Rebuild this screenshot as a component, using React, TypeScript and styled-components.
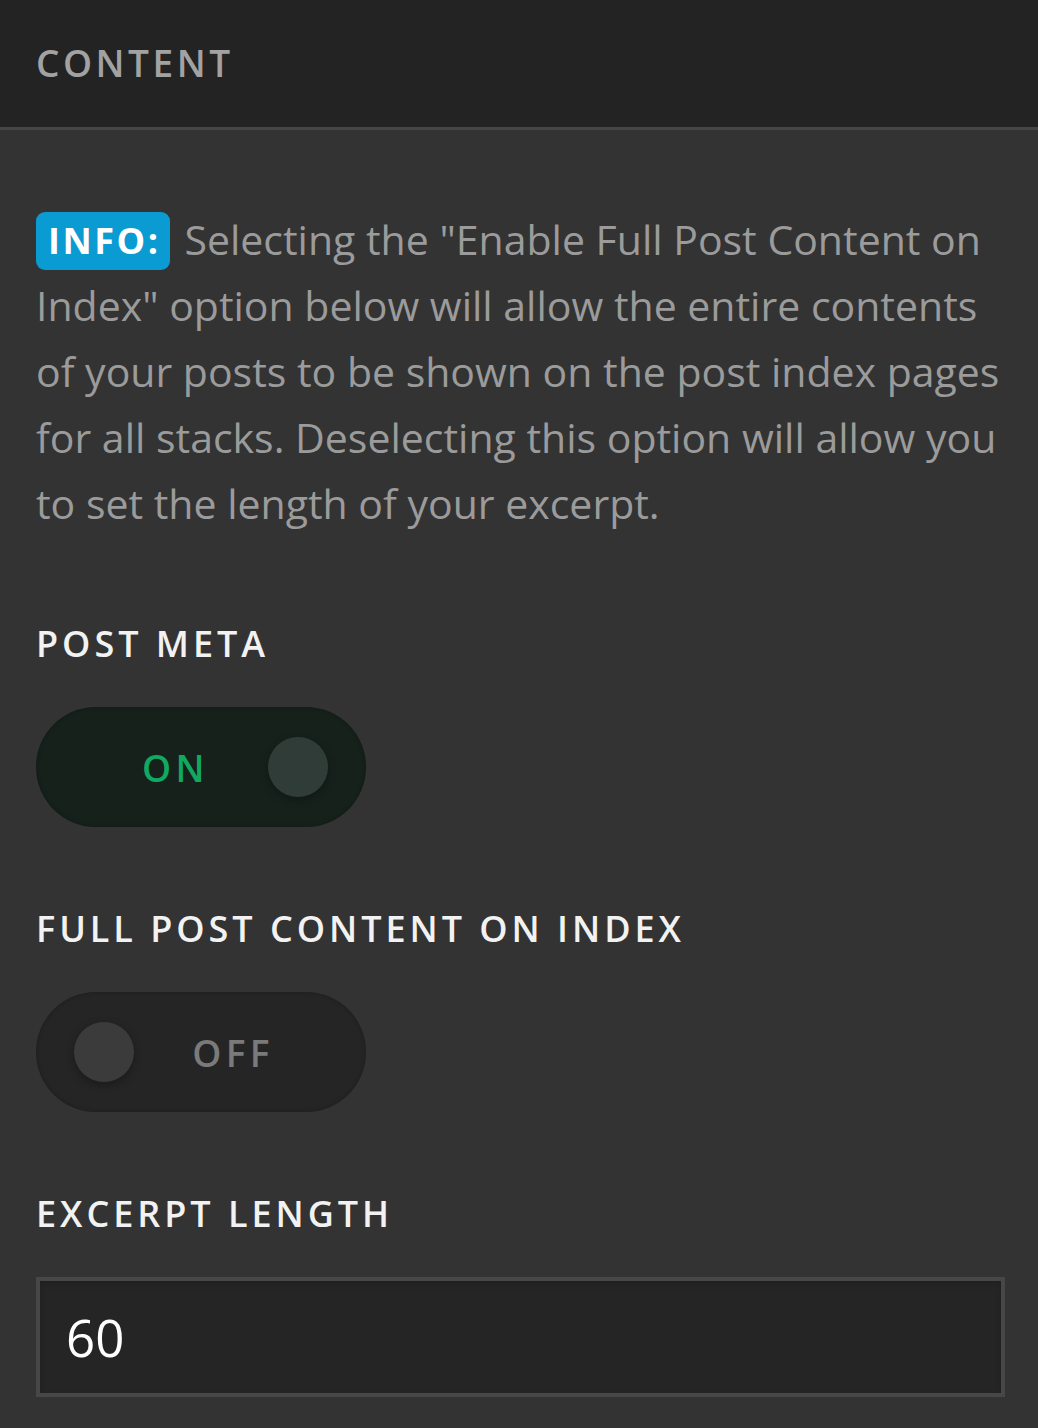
import { FC } from "react";
import styled, { createGlobalStyle } from "styled-components";

const GlobalStyle = createGlobalStyle`
  html, body {
    margin: 0;
    padding: 0;
    background-color: #333333;
  }
  body {
    font-family: "Open Sans", "Liberation Sans", sans-serif;
  }
`;

const Panel = styled.div`
  width: 1038px;
  min-height: 1428px;
  background-color: #333333;
`;

const Header = styled.div`
  height: 130px;
  background-color: #232323;
  border-bottom: 3px solid #464646;
  display: flex;
  align-items: center;
  padding: 0 36px 2px;
  box-sizing: border-box;

  h2 {
    margin: 0;
    font-size: 37px;
    font-weight: 600;
    letter-spacing: 0.095em;
    color: #a2a2a2;
  }
`;

const Body = styled.div`
  padding: 76px 33px 0 36px;
  display: flex;
  flex-direction: column;
`;

const Info = styled.p`
  margin: 0 0 83px;
  font-size: 41px;
  line-height: 66px;
  color: #9b9b9b;
`;

const Badge = styled.span`
  display: inline-block;
  background-color: #0b9bd3;
  color: #ffffff;
  font-weight: 700;
  letter-spacing: 0.07em;
  font-size: 36px;
  line-height: 58px;
  padding: 0 10px 0 12px;
  border-radius: 9px;
  margin-right: 14px;
  vertical-align: 1px;
`;

const Label = styled.div`
  font-size: 36px;
  font-weight: 600;
  letter-spacing: 0.11em;
  color: #f2f2f2;
  line-height: 50px;
  margin-bottom: 38px;
`;

const Toggle = styled.div<{ $on: boolean }>`
  width: 330px;
  height: 120px;
  border-radius: 60px;
  box-sizing: border-box;
  background-color: ${(p) => (p.$on ? "#16211c" : "#252525")};
  box-shadow: inset 0 0 4px rgba(0, 0, 0, 0.25);
  display: flex;
  flex-direction: ${(p) => (p.$on ? "row" : "row-reverse")};
  align-items: center;
  justify-content: space-between;
  padding: ${(p) => (p.$on ? "0 38px 0 106px" : "0 92px 0 38px")};
  margin-bottom: 77px;

  span {
    font-size: 37px;
    font-weight: 600;
    letter-spacing: 0.12em;
    color: ${(p) => (p.$on ? "#11a862" : "#7a7a7a")};
  }
`;

const Knob = styled.div<{ $on: boolean }>`
  width: 60px;
  height: 60px;
  border-radius: 50%;
  background-color: ${(p) => (p.$on ? "#2f3c37" : "#3b3b3b")};
  box-shadow: 0 3px 8px rgba(0, 0, 0, 0.3);
`;

const Input = styled.div`
  height: 120px;
  box-sizing: border-box;
  border: 4px solid #474747;
  background-color: #252525;
  box-shadow: inset 0 3px 6px rgba(0, 0, 0, 0.15);
  display: flex;
  align-items: center;
  padding-left: 26px;
  font-size: 51px;
  color: #ffffff;
`;

const App: FC = () => {
  return (
    <Panel>
      <GlobalStyle />
      <Header>
        <h2>CONTENT</h2>
      </Header>
      <Body>
        <Info>
          <Badge>INFO:</Badge>
          Selecting the "Enable Full Post Content on Index" option below will allow the entire contents of your posts
          to be shown on the post index pages for all stacks. Deselecting this option will allow you to set the length
          of your excerpt.
        </Info>
        <Label>POST META</Label>
        <Toggle $on={true}>
          <span>ON</span>
          <Knob $on={true} />
        </Toggle>
        <Label>FULL POST CONTENT ON INDEX</Label>
        <Toggle $on={false}>
          <span>OFF</span>
          <Knob $on={false} />
        </Toggle>
        <Label>EXCERPT LENGTH</Label>
        <Input>60</Input>
      </Body>
    </Panel>
  );
};

export default App;
